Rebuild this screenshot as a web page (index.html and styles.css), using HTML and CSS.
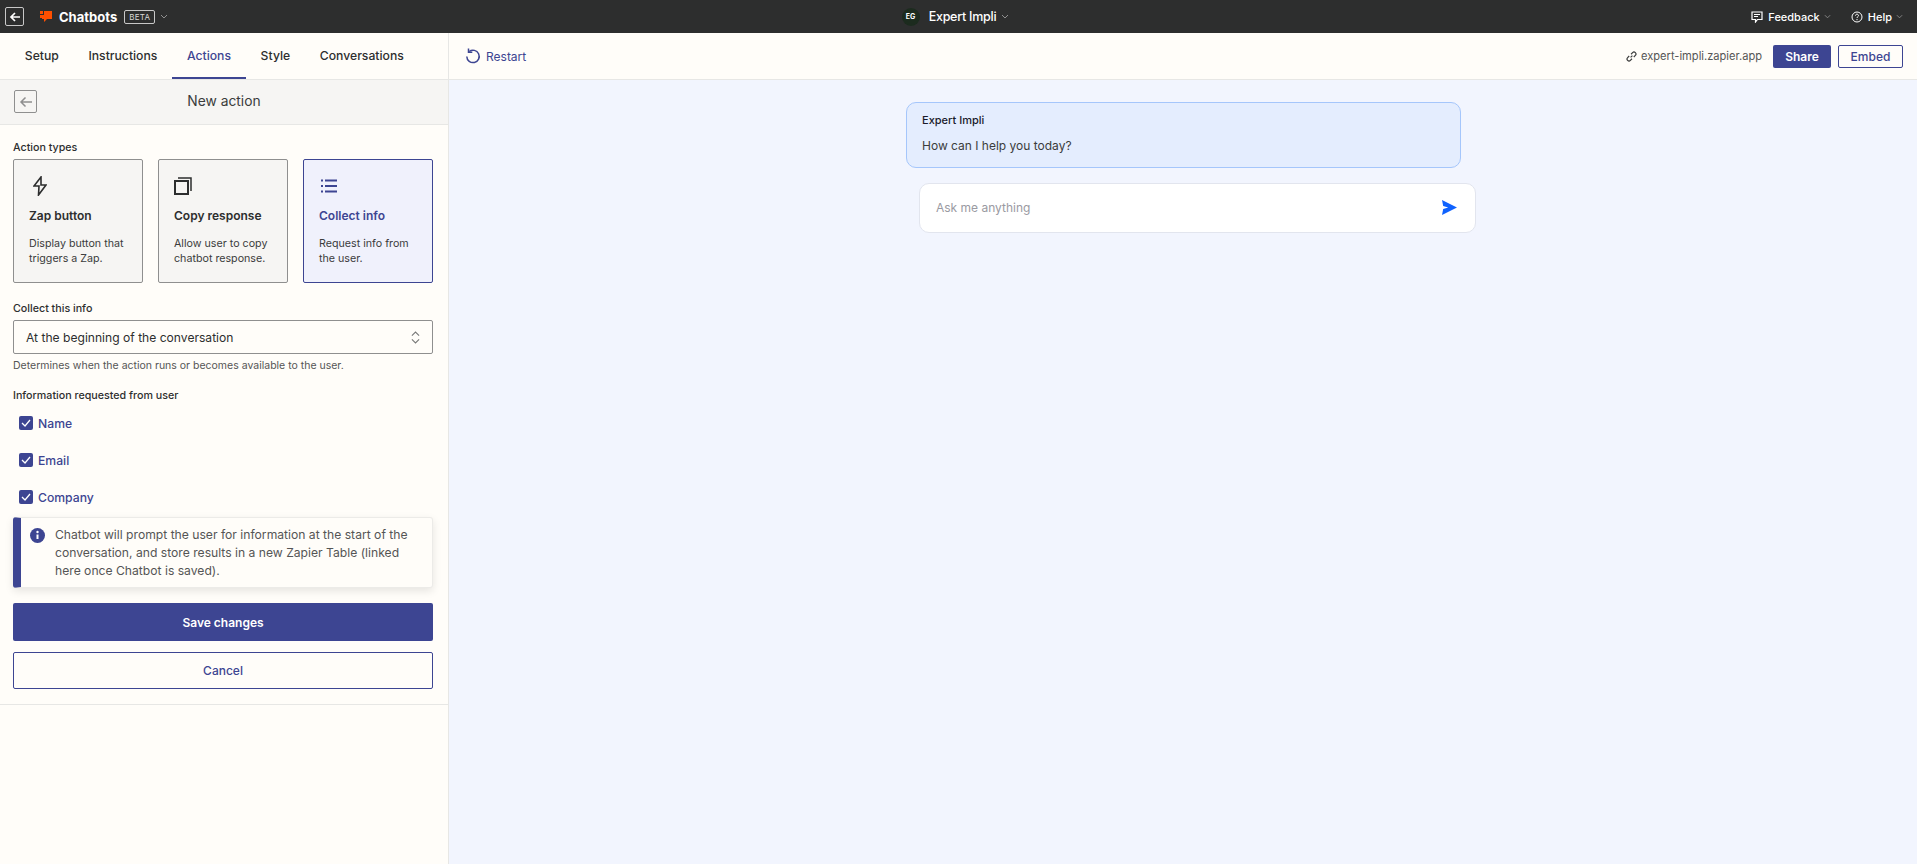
FILE: index.html
```html
<!DOCTYPE html>
<html lang="en">

<head>
    <meta charset="UTF-8">
    <meta name="viewport" content="width=device-width, initial-scale=1.0">
    <title>Chatbots</title>
    <link rel="stylesheet" href="styles.css">
</head>

<body>
    <header class="topbar">
        <div class="top-left">
            <div class="top-back">
                <svg width="12" height="12" viewBox="0 0 12 12"><path d="M11 6H2M6 2 2 6l4 4" fill="none" stroke="#fff" stroke-width="1.7"/></svg>
            </div>
            <svg class="logo" width="12" height="12" viewBox="0 0 12 12"><path d="M0 0h3v3H0zM0 4h4V0h8v8H7l-3 3V8H2V7H0z" fill="#ff4f00"/></svg>
            <span class="brand">Chatbots</span>
            <span class="beta">BETA</span>
            <svg class="chev" width="8" height="5" viewBox="0 0 8 5"><path d="M1 1l3 3 3-3"/></svg>
        </div>
        <div class="top-center">
            <span class="avatar">EG</span>
            <span class="bot-name">Expert Impli</span>
            <svg class="chev" width="8" height="5" viewBox="0 0 8 5"><path d="M1 1l3 3 3-3"/></svg>
        </div>
        <div class="top-right">
            <svg width="12" height="12" viewBox="0 0 12 12"><path d="M1 1h10v7.500H6.500L4.500 11V8.500H1z" fill="none" stroke="#fff" stroke-width="1.200"/><path d="M3 3.500h6M3 5.500h4" stroke="#fff"/></svg>
            <span class="top-link">Feedback</span>
            <svg class="chev" width="8" height="5" viewBox="0 0 8 5"><path d="M1 1l3 3 3-3"/></svg>
            <svg class="help-icon" width="12" height="12" viewBox="0 0 12 12"><circle cx="6" cy="6" r="5" fill="none" stroke="#fff"/><path d="M4.500 4.700C4.500 3.800 5.100 3.200 6 3.200S7.500 3.800 7.500 4.600C7.500 5.700 6 5.700 6 7" fill="none" stroke="#fff"/><path d="M6 8v1.200" stroke="#fff"/></svg>
            <span class="top-link">Help</span>
            <svg class="chev" width="8" height="5" viewBox="0 0 8 5"><path d="M1 1l3 3 3-3"/></svg>
        </div>
    </header>

    <div class="main">
        <aside class="sidebar">
            <nav class="tabs">
                <a class="tab">Setup</a>
                <a class="tab">Instructions</a>
                <a class="tab active">Actions</a>
                <a class="tab">Style</a>
                <a class="tab">Conversations</a>
            </nav>
            <div class="sub-head">
                <div class="sub-back">
                    <svg width="14" height="12" viewBox="0 0 14 12"><path d="M13 6H2M6.500 1.500 2 6l4.500 4.500" fill="none" stroke="#8f8f8f" stroke-width="1.500"/></svg>
                </div>
                <h2 class="sub-title">New action</h2>
            </div>

            <form class="form">
                <div class="label">Action types</div>
                <div class="cards">
                    <div class="card">
                        <svg class="card-icon icon-zap" width="14" height="20" viewBox="0 0 14 20"><path d="M8 1 1 10h5l-.5 9L13 9H8z" fill="none" stroke="#2d2e2e" stroke-width="1.600"/></svg>
                        <div class="card-title">Zap button</div>
                        <div class="card-text">Display button that triggers a Zap.</div>
                    </div>
                    <div class="card">
                        <svg class="card-icon icon-copy" width="18" height="20" viewBox="0 0 18 20"><rect x="1" y="5" width="13" height="13" fill="none" stroke="#2d2e2e" stroke-width="2"/><path d="M4 2H17V15" fill="none" stroke="#2d2e2e" stroke-width="1.500"/></svg>
                        <div class="card-title">Copy response</div>
                        <div class="card-text">Allow user to copy chatbot response.</div>
                    </div>
                    <div class="card selected">
                        <svg class="card-icon icon-list" width="16" height="20" viewBox="0 0 16 20"><path d="M0 4.500h2M0 10h2M0 15.500h2M4 4.500h12M4 10h12M4 15.500h12" fill="none" stroke="#3d4592" stroke-width="2"/></svg>
                        <div class="card-title">Collect info</div>
                        <div class="card-text">Request info from the user.</div>
                    </div>
                </div>

                <div class="label collect-label">Collect this info</div>
                <div class="select">
                    <span>At the beginning of the conversation</span>
                    <svg width="9" height="13" viewBox="0 0 10 14"><path d="M1 5l4-4 4 4M1 9l4 4 4-4" fill="none" stroke="#777" stroke-width="1.200"/></svg>
                </div>
                <div class="help-text">Determines when the action runs or becomes available to the user.</div>

                <div class="label info-label">Information requested from user</div>
                <div class="checks">
                    <div class="check"><span class="box"><svg width="10" height="8" viewBox="0 0 10 8"><path d="M1 4l3 3 5-6" fill="none" stroke="#fff" stroke-width="1.300"/></svg></span>Name</div>
                    <div class="check"><span class="box"><svg width="10" height="8" viewBox="0 0 10 8"><path d="M1 4l3 3 5-6" fill="none" stroke="#fff" stroke-width="1.300"/></svg></span>Email</div>
                    <div class="check"><span class="box"><svg width="10" height="8" viewBox="0 0 10 8"><path d="M1 4l3 3 5-6" fill="none" stroke="#fff" stroke-width="1.300"/></svg></span>Company</div>
                </div>

                <div class="alert">
                    <svg class="alert-icon" width="15" height="15" viewBox="0 0 15 15"><circle cx="7.500" cy="7.500" r="7.500" fill="#3d4592"/><path d="M7.500 6.500v4.500" stroke="#fff" stroke-width="2"/><circle cx="7.500" cy="4" r="1.200" fill="#fff"/></svg>
                    <p>Chatbot will prompt the user for information at the start of the conversation, and store results in a new Zapier Table (linked here once Chatbot is saved).</p>
                </div>

                <button type="button" class="btn-save">Save changes</button>
                <button type="button" class="btn-cancel">Cancel</button>
            </form>
        </aside>

        <section class="content">
            <div class="content-bar">
                <div class="restart">
                    <svg width="16" height="16" viewBox="0 0 16 16"><path d="M4.200 3.500A6.200 6.200 0 1 1 1.800 8.500" fill="none" stroke="#3d4592" stroke-width="1.500"/><path d="M3.500 0.500v3.800h3.800" fill="none" stroke="#3d4592" stroke-width="1.500"/></svg>
                    <span>Restart</span>
                </div>
                <div class="bar-right">
                    <svg width="11" height="11" viewBox="0 0 12 12"><path d="M5 7l2-2M3.500 5.500 1.800 7.200a2.100 2.100 0 0 0 3 3L6.500 8.500M5.500 3.500l1.700-1.700a2.100 2.100 0 0 1 3 3L8.500 6.500" fill="none" stroke="#3b3c3c" stroke-width="1.300"/></svg>
                    <span class="app-link">expert-impli.zapier.app</span>
                    <button type="button" class="btn-share">Share</button>
                    <button type="button" class="btn-embed">Embed</button>
                </div>
            </div>
            <div class="chat">
                <div class="bubble">
                    <div class="bubble-name">Expert Impli</div>
                    <div class="bubble-text">How can I help you today?</div>
                </div>
                <div class="ask">
                    <span>Ask me anything</span>
                    <svg width="15" height="15" viewBox="0 0 15 15"><path d="M0 0l15 7.500L0 15l1.200-6 5-1.500-5-1.500z" fill="#0f62fe"/></svg>
                </div>
            </div>
        </section>
    </div>
</body>

</html>
```

FILE: styles.css
```css
* {
    margin: 0;
    padding: 0;
    box-sizing: border-box;
}

html,
body {
    height: 100%;
}

body {
    font-family: Inter, "Liberation Sans", sans-serif;
    color: #2d2e2e;
    background-color: #f2f5fe;
    display: flex;
    flex-direction: column;
    overflow: hidden;
}

svg {
    flex-shrink: 0;
    display: block;
}

.chev {
    fill: none;
    stroke: #8f8f8f;
}

/* top bar */
.topbar {
    height: 33px;
    flex-shrink: 0;
    background-color: #2d2e2e;
    color: white;
    display: grid;
    grid-template-columns: 1fr auto 1fr;
    align-items: center;
    padding: 0 14px 0 5px;
}

.top-left {
    display: flex;
    align-items: center;
}

.top-back {
    width: 19px;
    height: 19px;
    border: 1px solid #c8c8c8;
    border-radius: 2px;
    display: flex;
    align-items: center;
    justify-content: center;
}

.logo {
    margin-left: 16px;
}

.brand {
    font-size: 13px;
    font-weight: 700;
    margin-left: 7px;
}

.beta {
    font-size: 8px;
    letter-spacing: 0.3px;
    line-height: 12px;
    border: 1px solid #c8c8c8;
    border-radius: 2px;
    padding: 0 4px;
    margin-left: 7px;
    color: #d8d8d8;
}

.top-left .chev {
    margin-left: 5px;
}

.top-center {
    display: flex;
    align-items: center;
    margin-left: 3px;
}

.avatar {
    width: 18px;
    height: 18px;
    border-radius: 50%;
    background-color: #1c2b1e;
    font-size: 7px;
    font-weight: 700;
    display: flex;
    align-items: center;
    justify-content: center;
}

.bot-name {
    font-size: 12.500px;
    font-weight: 500;
    letter-spacing: -0.25px;
    margin-left: 9px;
}

.top-center .chev {
    margin-left: 5px;
}

.top-right {
    display: flex;
    align-items: center;
    justify-content: flex-end;
}

.top-link {
    font-size: 11px;
    font-weight: 500;
    margin-left: 5px;
}

.top-right .chev {
    width: 7px;
    margin-left: 4px;
}

.help-icon {
    margin-left: 20px;
}

/* layout */
.main {
    flex: 1;
    display: flex;
    min-height: 0;
}

.sidebar {
    width: 449px;
    flex-shrink: 0;
    background-color: #fffdf9;
    border-right: 1px solid #e7e7e5;
}

/* tabs */
.tabs {
    height: 47px;
    display: flex;
    padding-left: 10px;
    border-bottom: 1px solid #e7e7e5;
}

.tab {
    font-size: 12.200px;
    font-weight: 500;
    line-height: 46px;
    padding: 0 14.800px;
    color: #2d2e2e;
}

.tab.active {
    color: #3d4592;
    border-bottom: 2px solid #3d4592;
    height: 46px;
}

.sub-head {
    height: 45px;
    position: relative;
    background-color: #f6f5f3;
    border-bottom: 1px solid #e7e7e5;
    display: flex;
    align-items: center;
    justify-content: center;
}

.sub-back {
    position: absolute;
    left: 14px;
    top: 10px;
    width: 23px;
    height: 23px;
    border: 1px solid #8f8f8f;
    border-radius: 2px;
    display: flex;
    align-items: center;
    justify-content: center;
}

.sub-title {
    font-size: 13.800px;
    font-weight: 400;
    margin-top: -2px;
    color: #3b3c3c;
}

/* form */
.form {
    padding: 16px 15px 15px 13px;
    border-bottom: 1px solid #e7e7e5;
}

.label {
    font-size: 10.700px;
    font-weight: 500;
    line-height: 14px;
}

.cards {
    display: grid;
    grid-template-columns: repeat(3, 130px);
    gap: 15px;
    margin-top: 4px;
}

.card {
    height: 124px;
    padding: 16px 15px 0;
    background-color: #f6f5f3;
    border: 1px solid #8f8f8f;
    border-radius: 2px;
}

.card.selected {
    background-color: #f0f1fc;
    border-color: #3d4592;
    color: #3d4592;
}

.card-icon {
    height: 20px;
}

.icon-zap {
    margin-left: 4px;
}

.icon-list {
    margin-left: 2px;
}

.card-title {
    font-size: 12px;
    font-weight: 600;
    line-height: 16px;
    margin-top: 12px;
}

.card-text {
    font-size: 10.700px;
    line-height: 15px;
    margin-top: 12px;
    color: #3b3c3c;
}

.collect-label {
    margin-top: 19px;
}

.select {
    height: 34px;
    margin-top: 4px;
    padding: 0 12px;
    border: 1px solid #8f8f8f;
    border-radius: 2px;
    display: flex;
    align-items: center;
    justify-content: space-between;
    font-size: 12.100px;
}

.help-text {
    font-size: 10.500px;
    line-height: 14px;
    margin-top: 5px;
    color: #555;
}

.info-label {
    margin-top: 16px;
}

.check {
    height: 14px;
    display: flex;
    align-items: center;
    gap: 5px;
    margin: 13px 0 0 6px;
    font-size: 12.200px;
    font-weight: 500;
    color: #3d4592;
}

.check + .check {
    margin-top: 23px;
}

.box {
    width: 14px;
    height: 14px;
    border-radius: 2px;
    background-color: #3d4592;
    display: flex;
    align-items: center;
    justify-content: center;
}

.alert {
    height: 71px;
    margin-top: 13px;
    padding: 8px 20px 0 9px;
    display: flex;
    gap: 10px;
    background-color: #fffdf9;
    border: 1px solid #ecebe8;
    border-left: 8px solid #3d4592;
    border-radius: 3px;
    box-shadow: 0 3px 8px rgba(0, 0, 0, 0.1);
}

.alert-icon {
    margin-top: 2px;
}

.alert p {
    font-size: 12.150px;
    line-height: 18px;
    color: #555;
}

.btn-save,
.btn-cancel {
    display: block;
    width: 100%;
    border-radius: 2px;
    font-family: inherit;
    font-size: 12px;
}

.btn-save {
    height: 38px;
    margin-top: 15px;
    border: none;
    background-color: #3d4592;
    color: white;
    font-weight: 600;
}

.btn-cancel {
    height: 37px;
    margin-top: 11px;
    border: 1px solid #3d4592;
    background-color: #fffdf9;
    color: #3d4592;
    font-weight: 500;
}

/* right side */
.content {
    flex: 1;
    min-width: 0;
}

.content-bar {
    height: 47px;
    padding: 0 14px 0 16px;
    background-color: #fffdf9;
    border-bottom: 1px solid #e7e7e5;
    display: flex;
    align-items: center;
    justify-content: space-between;
}

.restart {
    display: flex;
    align-items: center;
    gap: 5px;
    font-size: 12px;
    color: #3d4592;
}

.bar-right {
    display: flex;
    align-items: center;
}

.app-link {
    font-size: 11.100px;
    margin: 0 11px 0 4px;
    color: #555;
}

.btn-share,
.btn-embed {
    height: 23px;
    border-radius: 2px;
    font-family: inherit;
    font-size: 12px;
    font-weight: 600;
}

.btn-share {
    width: 58px;
    border: none;
    background-color: #3d4592;
    color: white;
}

.btn-embed {
    width: 65px;
    margin-left: 7px;
    border: 1px solid #3d4592;
    background-color: #fffdf9;
    color: #3d4592;
    font-weight: 500;
}

.chat {
    width: 570px;
    margin-left: 457px;
    padding-top: 22px;
}

.bubble {
    width: 555px;
    height: 66px;
    padding: 10px 15px;
    background-color: #e4edfe;
    border: 1px solid #a5c6fb;
    border-radius: 10px;
}

.bubble-name {
    font-size: 11px;
    font-weight: 500;
    line-height: 14px;
    color: #1a1a2a;
}

.bubble-text {
    font-size: 12px;
    line-height: 16px;
    margin-top: 11px;
    color: #3b3c3c;
}

.ask {
    width: 557px;
    height: 50px;
    margin: 15px 0 0 13px;
    padding: 0 18px 1px 16px;
    background-color: white;
    border: 1px solid #e2e5ee;
    border-radius: 10px;
    display: flex;
    align-items: center;
    justify-content: space-between;
    font-size: 12px;
    color: #9a9aa2;
}
```
